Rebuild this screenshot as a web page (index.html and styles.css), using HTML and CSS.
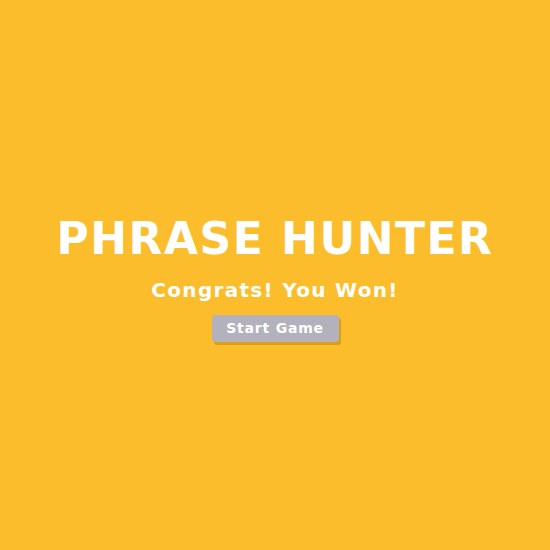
FILE: index.html
```html
<!DOCTYPE html>
<html>
<head>
<meta charset="utf-8">
<link rel="stylesheet" href="styles.css">
</head>
<body>
<main class="overlay">
  <h1 class="title">PHRASE HUNTER</h1>
  <h2 class="message">Congrats! You Won!</h2>
  <button class="btn-reset">Start Game</button>
</main>
</body>
</html>
```
FILE: styles.css
```css
html, body {
  margin: 0;
  padding: 0;
  height: 100%;
}
body {
  background: #fbbd2c;
  font-family: "DejaVu Sans", Verdana, sans-serif;
}
.overlay {
  height: 100%;
  display: flex;
  flex-direction: column;
  align-items: center;
  justify-content: center;
  color: #fff;
  padding-top: 8px;
  box-sizing: border-box;
}
.title {
  margin: 0;
  font-size: 44px;
  font-weight: bold;
  letter-spacing: 1.5px;
  line-height: 1;
}
.message {
  margin: 19px 0 0;
  font-size: 20px;
  font-weight: bold;
  letter-spacing: 1.3px;
  line-height: 1;
}
.btn-reset {
  margin-top: 15px;
  width: 127px;
  height: 27px;
  border: none;
  border-radius: 3px;
  background: #b3b1bc;
  color: #fff;
  font-family: "DejaVu Sans", Verdana, sans-serif;
  font-weight: bold;
  font-size: 14px;
  letter-spacing: 0.8px;
  box-shadow: 2px 3px 0 rgba(180, 120, 0, 0.45);
  padding: 0;
}
```
